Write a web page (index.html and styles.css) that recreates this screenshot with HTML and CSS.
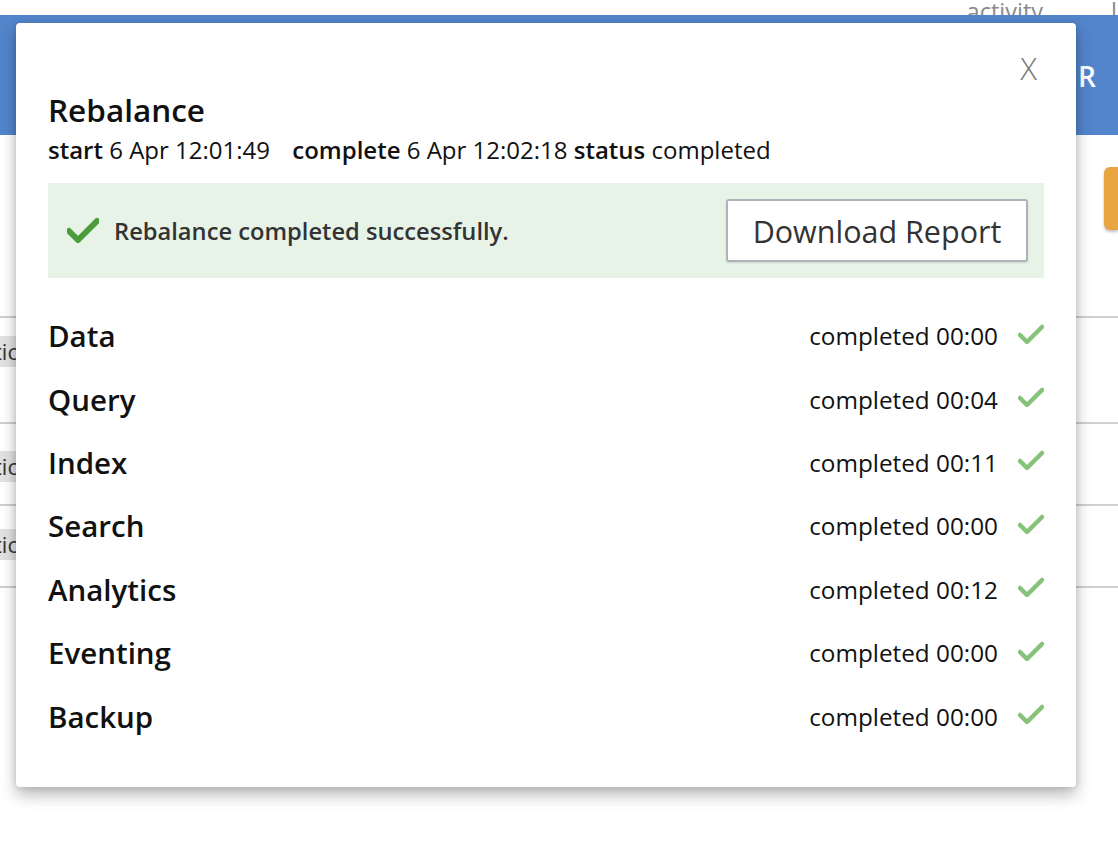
FILE: index.html
```html
<!DOCTYPE html>
<html>
<head>
<meta charset="utf-8">
<link rel="stylesheet" href="styles.css">
</head>
<body>
<div class="page">
  <div class="topbar"><span class="top-link">activity</span><span class="top-link2">l</span></div>
  <div class="header"><span class="header-text">R</span></div>
  <div class="content">
    <div class="toolbar"><span class="orange-btn"></span></div>
    <div class="trow"><span class="tag">tic</span></div>
    <div class="trow short"><span class="tag">tic</span></div>
    <div class="trow short"><span class="tag">tic</span></div>
  </div>
</div>

<div class="modal">
  <button class="close">X</button>
  <h1 class="title">Rebalance</h1>
  <div class="meta">
    <span><b>start</b> 6 Apr 12:01:49</span>
    <span class="meta-gap"><b>complete</b> 6 Apr 12:02:18 <b>status</b> completed</span>
  </div>
  <div class="banner">
    <div class="banner-msg">
      <svg class="ok-big" viewBox="0 0 32 26" width="32" height="26"><path d="M2 14 L11 23 L30 4" fill="none" stroke="#4d9c3c" stroke-width="6" stroke-linecap="round" stroke-linejoin="round"/></svg>
      <span>Rebalance completed successfully.</span>
    </div>
    <button class="download">Download Report</button>
  </div>
  <div class="services">
    <div class="svc"><span class="svc-name">Data</span><span class="svc-status">completed 00:00<svg class="ok" viewBox="0 0 26 20" width="26" height="20"><path d="M2 11 L9 18 L24 3" fill="none" stroke="#87c27a" stroke-width="4.5" stroke-linecap="round" stroke-linejoin="round"/></svg></span></div>
    <div class="svc"><span class="svc-name">Query</span><span class="svc-status">completed 00:04<svg class="ok" viewBox="0 0 26 20" width="26" height="20"><path d="M2 11 L9 18 L24 3" fill="none" stroke="#87c27a" stroke-width="4.5" stroke-linecap="round" stroke-linejoin="round"/></svg></span></div>
    <div class="svc"><span class="svc-name">Index</span><span class="svc-status">completed 00:11<svg class="ok" viewBox="0 0 26 20" width="26" height="20"><path d="M2 11 L9 18 L24 3" fill="none" stroke="#87c27a" stroke-width="4.5" stroke-linecap="round" stroke-linejoin="round"/></svg></span></div>
    <div class="svc"><span class="svc-name">Search</span><span class="svc-status">completed 00:00<svg class="ok" viewBox="0 0 26 20" width="26" height="20"><path d="M2 11 L9 18 L24 3" fill="none" stroke="#87c27a" stroke-width="4.5" stroke-linecap="round" stroke-linejoin="round"/></svg></span></div>
    <div class="svc"><span class="svc-name">Analytics</span><span class="svc-status">completed 00:12<svg class="ok" viewBox="0 0 26 20" width="26" height="20"><path d="M2 11 L9 18 L24 3" fill="none" stroke="#87c27a" stroke-width="4.5" stroke-linecap="round" stroke-linejoin="round"/></svg></span></div>
    <div class="svc"><span class="svc-name">Eventing</span><span class="svc-status">completed 00:00<svg class="ok" viewBox="0 0 26 20" width="26" height="20"><path d="M2 11 L9 18 L24 3" fill="none" stroke="#87c27a" stroke-width="4.5" stroke-linecap="round" stroke-linejoin="round"/></svg></span></div>
    <div class="svc"><span class="svc-name">Backup</span><span class="svc-status">completed 00:00<svg class="ok" viewBox="0 0 26 20" width="26" height="20"><path d="M2 11 L9 18 L24 3" fill="none" stroke="#87c27a" stroke-width="4.5" stroke-linecap="round" stroke-linejoin="round"/></svg></span></div>
  </div>
</div>
</body>
</html>
```

FILE: styles.css
```css
* { box-sizing: border-box; }
html, body { margin: 0; padding: 0; background: #fff; }
body { font-family: "Open Sans", "Liberation Sans", sans-serif; color: #111; width: 1118px; height: 844px; overflow: hidden; position: relative; }

.page { background: #fff; }
.topbar { height: 15px; overflow: hidden; display: flex; justify-content: flex-end; align-items: flex-end; gap: 68px; padding-right: 1px; }
.top-link, .top-link2 { font-size: 23.5px; line-height: 20px; color: #8a8a8a; margin-bottom: -6px; }
.header { height: 120px; background: #5385cb; display: flex; justify-content: flex-end; align-items: center; padding-right: 22px; }
.header-text { color: #fff; font-size: 28px; font-weight: 600; margin-top: 2px; }
.toolbar { height: 183px; border-bottom: 2px solid #cfcfcf; display: flex; justify-content: flex-end; padding-top: 32px; }
.orange-btn { width: 14px; height: 63px; background: #e9a541; border-radius: 6px 0 0 6px; box-shadow: 0 2px 3px rgba(0,0,0,.25); }
.trow { height: 106px; border-bottom: 2px solid #cfcfcf; padding-top: 18px; }
.trow.short { height: 82px; padding-top: 27px; }
.trow:nth-child(4) { padding-top: 23px; }
.tag { display: inline-block; background: #e2e2e2; color: #333; font-size: 22px; line-height: 31px; margin-left: -6px; width: 24px; overflow: hidden; }

.modal {
  position: absolute; left: 16px; top: 23px; width: 1060px; height: 764px;
  background: #fff; border-radius: 4px;
  box-shadow: 0 8px 16px rgba(0,0,0,.28), 0 0 6px rgba(0,0,0,.12);
  padding: 62px 32px 32px;
}
.close { position: absolute; top: 27px; right: 39px; background: none; border: 0; padding: 0; font-family: inherit; font-size: 31px; font-weight: 300; color: #777; line-height: 36px; cursor: pointer; }
.title { margin: 0; font-size: 31.5px; font-weight: 600; line-height: 50px; color: #111; }
.meta { font-size: 24px; line-height: 30px; color: #111; }
.meta b { font-weight: 600; }
.meta-gap { margin-left: 16px; }
.banner { margin-top: 18px; background: #e8f3e8; height: 95px; display: flex; align-items: center; justify-content: space-between; padding: 0 16px 0 19px; }
.banner-msg { display: flex; align-items: center; gap: 15px; font-size: 23.7px; font-weight: 600; color: #333; }
.ok-big { display: block; margin-top: -2px; }
.download { background: #fff; border: 2px solid #aeb2bb; border-radius: 3px; height: 63px; width: 302px; font-family: inherit; font-size: 30.5px; color: #333; padding: 0; box-shadow: 0 1px 2px rgba(0,0,0,.12); }
.services { margin-top: 26px; display: flex; flex-direction: column; }
.svc { height: 63.4px; display: flex; align-items: center; justify-content: space-between; }
.svc-name { font-size: 29.5px; font-weight: 600; color: #111; }
.svc-status { display: flex; align-items: center; gap: 20px; font-size: 24.3px; color: #111; }
.ok { display: block; margin-top: -4px; }
```
